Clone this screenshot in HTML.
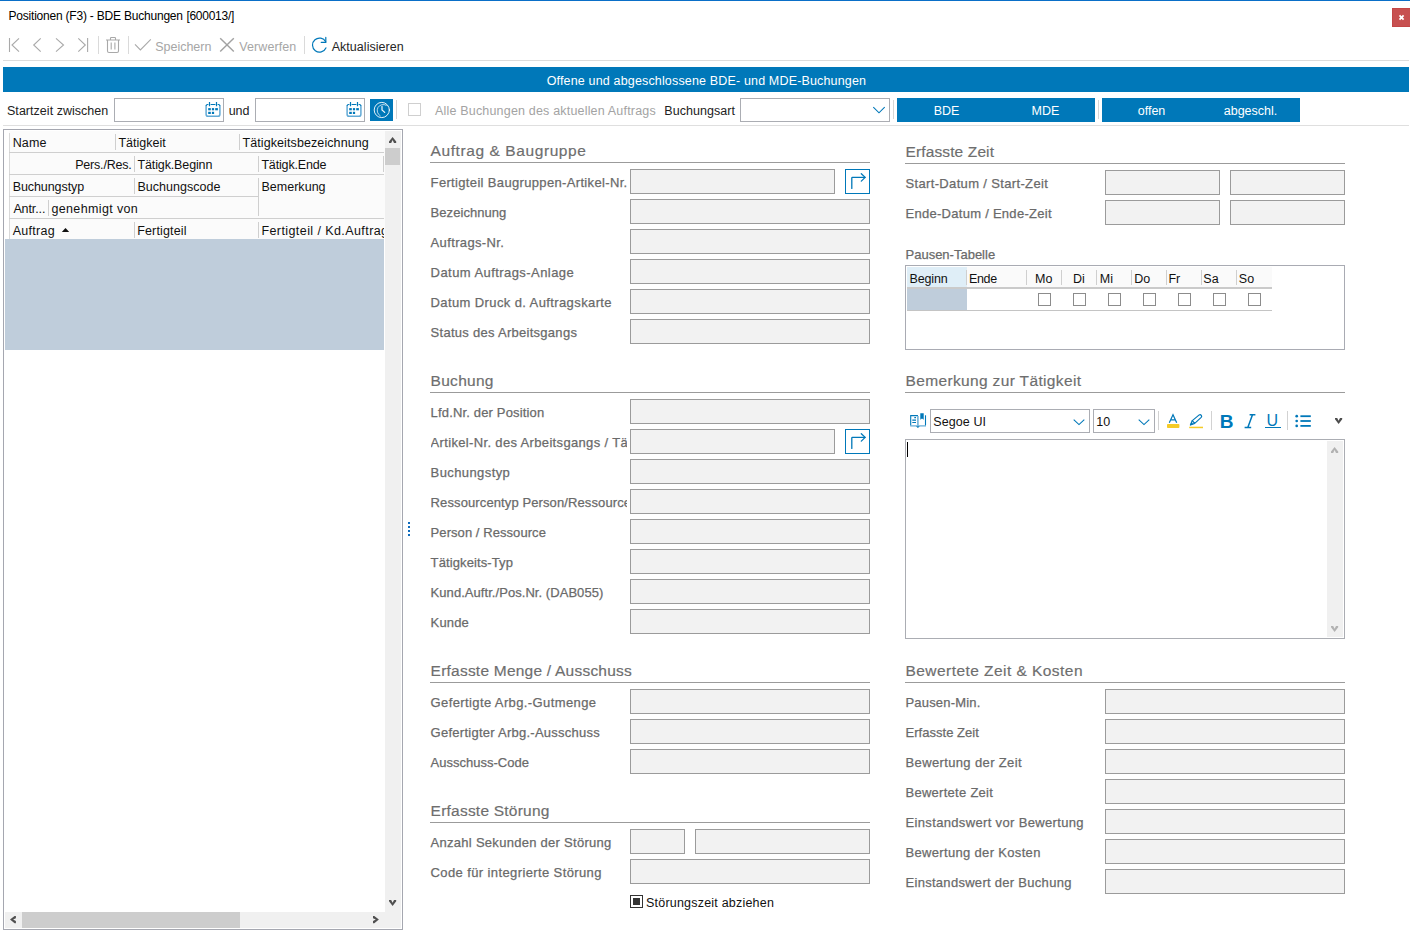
<!DOCTYPE html>
<html lang="de"><head><meta charset="utf-8"><title>Positionen (F3) - BDE Buchungen</title>
<style>
html,body{margin:0;padding:0;background:#fff;}
body{width:1410px;height:930px;overflow:hidden;font-family:"Liberation Sans",sans-serif;}
#app{position:relative;width:1410px;height:930px;overflow:hidden;background:#fff;}
#app div,#app svg,#app .t{position:absolute;}
#app .t{white-space:pre;line-height:normal;display:block;}
#app svg{overflow:visible;}
</style></head><body><div id="app">
<div style="left:0px;top:0px;width:1410px;height:1px;background:#0a6fc8;"></div>
<span class="t" style="left:8.50px;top:9.00px;font-family:'Liberation Sans',sans-serif;font-size:12px;font-weight:400;font-style:normal;color:#000;letter-spacing:-0.209px;">Positionen (F3) - BDE Buchungen</span>
<span class="t" style="left:186.40px;top:9.00px;font-family:'Liberation Sans',sans-serif;font-size:12px;font-weight:400;font-style:normal;color:#000;letter-spacing:-0.268px;">[600013/]</span>
<div style="left:1392px;top:8px;width:19px;height:19px;background:#c75050;border:1px solid #c34646;box-sizing:border-box;"></div>
<svg style="left:1398px;top:14px;" width="7" height="7" viewBox="0 0 7 7"><path d="M1.5 1.4 L5.6 5.7 M5.6 1.4 L1.5 5.7" stroke="#fff" stroke-width="1.75" fill="none"/></svg>
<svg style="left:5px;top:34px;" width="130" height="22" viewBox="0 0 130 22"><g fill="none" stroke="#a9a9a9" stroke-width="1.1">
<path d="M4.5 4 V18"/><path d="M14 4.3 L7 11 L14 17.7"/>
<path d="M35.7 4.3 L28.7 11 L35.7 17.7"/>
<path d="M51 4.3 L58.5 11 L51 17.7"/>
<path d="M73.3 4.3 L80.3 11 L73.3 17.7"/><path d="M82.6 4 V18"/>
<path d="M101 6 H115 M105.5 6 V4.2 Q105.5 3.5 106.2 3.5 H109.8 Q110.5 3.5 110.5 4.2 V6 M102.5 6 V17 Q102.5 18.5 104 18.5 H112 Q113.5 18.5 113.5 17 V6 M106.2 8.5 V15.5 M109.9 8.5 V15.5"/>
</g></svg>
<div style="left:98px;top:36px;width:1px;height:18px;background:#dadada;"></div>
<div style="left:128px;top:36px;width:1px;height:18px;background:#dadada;"></div>
<svg style="left:132px;top:36px;" width="22" height="18" viewBox="0 0 22 18"><path d="M3 8.4 L8.4 13.9 L18.8 3.4" fill="none" stroke="#a9a9a9" stroke-width="1.1"/></svg>
<span class="t" style="left:155.30px;top:40.00px;font-family:'Liberation Sans',sans-serif;font-size:12.5px;font-weight:400;font-style:normal;color:#a6a6a6;letter-spacing:-0.025px;">Speichern</span>
<svg style="left:218px;top:36px;" width="18" height="18" viewBox="0 0 18 18"><path d="M2.2 2.2 L15.8 15.6 M15.8 2.2 L2.2 15.6" fill="none" stroke="#a2a2a2" stroke-width="1.45"/></svg>
<span class="t" style="left:239.20px;top:40.00px;font-family:'Liberation Sans',sans-serif;font-size:12.5px;font-weight:400;font-style:normal;color:#a6a6a6;letter-spacing:0.102px;">Verwerfen</span>
<div style="left:304px;top:36px;width:1px;height:18px;background:#dadada;"></div>
<svg style="left:310px;top:35px;" width="20" height="20" viewBox="0 0 20 20"><g fill="none" stroke="#0078b9" stroke-width="1.2" stroke-linecap="round">
<path d="M15.7 6.8 A7 7 0 1 0 15.9 12.9"/><path d="M15.8 2.4 V7.3 H11.2"/></g></svg>
<span class="t" style="left:331.70px;top:40.00px;font-family:'Liberation Sans',sans-serif;font-size:12.5px;font-weight:400;font-style:normal;color:#262626;letter-spacing:0.035px;">Aktualisieren</span>
<div style="left:3px;top:60px;width:1406px;height:1px;background:#dcdcdc;"></div>
<div style="left:3px;top:67px;width:1406px;height:25px;background:#0078b9;"></div>
<span class="t" style="left:546.70px;top:73.50px;font-family:'Liberation Sans',sans-serif;font-size:12.5px;font-weight:400;font-style:normal;color:#fff;letter-spacing:0.160px;">Offene und abgeschlossene BDE- und MDE-Buchungen</span>
<span class="t" style="left:7.00px;top:104.00px;font-family:'Liberation Sans',sans-serif;font-size:12.5px;font-weight:400;font-style:normal;color:#222;letter-spacing:0.033px;">Startzeit zwischen</span>
<div style="left:114px;top:98px;width:110px;height:24px;background:#fff;border:1px solid #abadb3;box-sizing:border-box;"></div>
<svg style="left:205px;top:101px;" width="16" height="17" viewBox="0 0 16 17"><g fill="none">
<path d="M1.1 4.6 V13.2 Q1.1 15.3 3.2 15.3 H12.8 Q14.9 15.3 14.9 13.2 V4.6" stroke="#62aad6" stroke-width="1.5"/>
<path d="M1.1 5 Q1.1 3.5 2.7 3.5 H3.4 M5.6 3.5 H10.4 M12.6 3.5 H13.3 Q14.9 3.5 14.9 5" stroke="#0078b9" stroke-width="1.2"/>
<path d="M4.5 0.9 V5.3 M11.5 0.9 V5.3" stroke="#0078b9" stroke-width="1.2"/></g>
<g fill="#0078b9"><rect x="3.2" y="7.1" width="2.6" height="2.2"/><rect x="6.9" y="7.1" width="2.2" height="2.2"/><rect x="10.2" y="7.1" width="2.7" height="2.2"/>
<rect x="3.2" y="10.8" width="2.6" height="2.2"/><rect x="6.9" y="10.8" width="2.2" height="2.2"/></g></svg>
<span class="t" style="left:228.67px;top:104.00px;font-family:'Liberation Sans',sans-serif;font-size:12.5px;font-weight:400;font-style:normal;color:#222;">und</span>
<div style="left:255px;top:98px;width:110px;height:24px;background:#fff;border:1px solid #abadb3;box-sizing:border-box;"></div>
<svg style="left:346px;top:101px;" width="16" height="17" viewBox="0 0 16 17"><g fill="none">
<path d="M1.1 4.6 V13.2 Q1.1 15.3 3.2 15.3 H12.8 Q14.9 15.3 14.9 13.2 V4.6" stroke="#62aad6" stroke-width="1.5"/>
<path d="M1.1 5 Q1.1 3.5 2.7 3.5 H3.4 M5.6 3.5 H10.4 M12.6 3.5 H13.3 Q14.9 3.5 14.9 5" stroke="#0078b9" stroke-width="1.2"/>
<path d="M4.5 0.9 V5.3 M11.5 0.9 V5.3" stroke="#0078b9" stroke-width="1.2"/></g>
<g fill="#0078b9"><rect x="3.2" y="7.1" width="2.6" height="2.2"/><rect x="6.9" y="7.1" width="2.2" height="2.2"/><rect x="10.2" y="7.1" width="2.7" height="2.2"/>
<rect x="3.2" y="10.8" width="2.6" height="2.2"/><rect x="6.9" y="10.8" width="2.2" height="2.2"/></g></svg>
<div style="left:370px;top:99px;width:23px;height:22px;background:#0078b9;"></div>
<svg style="left:370px;top:99px;" width="23" height="22" viewBox="0 0 23 22"><g fill="none" stroke="#fff" stroke-linecap="round">
<circle cx="11.8" cy="11" r="7.6" stroke-width="1" opacity=".9"/>
<path d="M16.3 6.3 A6 6 0 1 0 10.2 16.8" stroke-width=".9" opacity=".8"/>
<path d="M12 7.4 V11 L14.7 13.4" stroke-width="1.2" opacity=".95"/></g></svg>
<div style="left:396px;top:100px;width:1px;height:19px;background:#d6d6d6;"></div>
<div style="left:408px;top:103px;width:13px;height:13px;background:#fff;border:1px solid #cfcfcf;box-sizing:border-box;"></div>
<span class="t" style="left:435.00px;top:104.00px;font-family:'Liberation Sans',sans-serif;font-size:12.5px;font-weight:400;font-style:normal;color:#a3a3a3;letter-spacing:0.185px;">Alle Buchungen des aktuellen Auftrags</span>
<span class="t" style="left:664.30px;top:104.00px;font-family:'Liberation Sans',sans-serif;font-size:12.5px;font-weight:400;font-style:normal;color:#222;letter-spacing:0.051px;">Buchungsart</span>
<div style="left:740px;top:98px;width:150px;height:24px;background:#fff;border:1px solid #abadb3;box-sizing:border-box;"></div>
<svg style="left:872px;top:105px;" width="14" height="10" viewBox="0 0 14 10"><path d="M1.3 2.2 L7 7.8 L12.7 2.2" fill="none" stroke="#0078b9" stroke-width="1.1"/></svg>
<div style="left:893px;top:100px;width:1px;height:19px;background:#d6d6d6;"></div>
<div style="left:897px;top:98px;width:198px;height:24px;background:#0078b9;"></div>
<span class="t" style="left:933.65px;top:104.00px;font-family:'Liberation Sans',sans-serif;font-size:12.5px;font-weight:400;font-style:normal;color:#fff;">BDE</span>
<span class="t" style="left:1031.61px;top:104.00px;font-family:'Liberation Sans',sans-serif;font-size:12.5px;font-weight:400;font-style:normal;color:#fff;">MDE</span>
<div style="left:1098px;top:100px;width:1px;height:19px;background:#d6d6d6;"></div>
<div style="left:1102px;top:98px;width:198px;height:24px;background:#0078b9;"></div>
<span class="t" style="left:1137.71px;top:104.00px;font-family:'Liberation Sans',sans-serif;font-size:12.5px;font-weight:400;font-style:normal;color:#fff;">offen</span>
<span class="t" style="left:1223.74px;top:104.00px;font-family:'Liberation Sans',sans-serif;font-size:12.5px;font-weight:400;font-style:normal;color:#fff;">abgeschl.</span>
<div style="left:3px;top:125px;width:1406px;height:1px;background:#dfdfdf;"></div>
<div style="left:3px;top:129px;width:400px;height:801px;background:#fff;border:1px solid #a5a7b0;box-sizing:border-box;"></div>
<div style="left:9px;top:131px;width:376px;height:108px;background:#fbfbfb;"></div>
<div style="left:9px;top:133px;width:1px;height:106px;background:#d9d9d9;"></div>
<div style="left:9px;top:152px;width:375px;height:1px;background:#cfcfcf;"></div>
<div style="left:9px;top:174px;width:375px;height:1px;background:#cfcfcf;"></div>
<div style="left:9px;top:218px;width:375px;height:1px;background:#cfcfcf;"></div>
<div style="left:9px;top:196px;width:250px;height:1px;background:#cfcfcf;"></div>
<div style="left:115px;top:134px;width:1px;height:16px;background:#cfcfcf;"></div>
<div style="left:239px;top:134px;width:1px;height:16px;background:#cfcfcf;"></div>
<div style="left:134px;top:156px;width:1px;height:16px;background:#cfcfcf;"></div>
<div style="left:258px;top:156px;width:1px;height:16px;background:#cfcfcf;"></div>
<div style="left:383px;top:156px;width:1px;height:16px;background:#cfcfcf;"></div>
<div style="left:134px;top:178px;width:1px;height:16px;background:#cfcfcf;"></div>
<div style="left:134px;top:222px;width:1px;height:16px;background:#cfcfcf;"></div>
<div style="left:258px;top:222px;width:1px;height:16px;background:#cfcfcf;"></div>
<div style="left:48px;top:200px;width:1px;height:16px;background:#cfcfcf;"></div>
<div style="left:258px;top:178px;width:1px;height:38px;background:#cfcfcf;"></div>
<span class="t" style="left:12.70px;top:136.00px;font-family:'Liberation Sans',sans-serif;font-size:12.5px;font-weight:400;font-style:normal;color:#111;letter-spacing:0.152px;">Name</span>
<span class="t" style="left:118.40px;top:136.00px;font-family:'Liberation Sans',sans-serif;font-size:12.5px;font-weight:400;font-style:normal;color:#111;letter-spacing:0.019px;">Tätigkeit</span>
<span class="t" style="left:242.40px;top:136.00px;font-family:'Liberation Sans',sans-serif;font-size:12.5px;font-weight:400;font-style:normal;color:#111;letter-spacing:0.100px;">Tätigkeitsbezeichnung</span>
<span class="t" style="left:75.20px;top:158.00px;font-family:'Liberation Sans',sans-serif;font-size:12.5px;font-weight:400;font-style:normal;color:#111;letter-spacing:-0.195px;">Pers./Res.</span>
<span class="t" style="left:137.50px;top:158.00px;font-family:'Liberation Sans',sans-serif;font-size:12.5px;font-weight:400;font-style:normal;color:#111;letter-spacing:-0.128px;">Tätigk.Beginn</span>
<span class="t" style="left:261.40px;top:158.00px;font-family:'Liberation Sans',sans-serif;font-size:12.5px;font-weight:400;font-style:normal;color:#111;letter-spacing:-0.152px;">Tätigk.Ende</span>
<span class="t" style="left:12.70px;top:180.00px;font-family:'Liberation Sans',sans-serif;font-size:12.5px;font-weight:400;font-style:normal;color:#111;letter-spacing:-0.078px;">Buchungstyp</span>
<span class="t" style="left:137.50px;top:180.00px;font-family:'Liberation Sans',sans-serif;font-size:12.5px;font-weight:400;font-style:normal;color:#111;letter-spacing:0.018px;">Buchungscode</span>
<span class="t" style="left:261.40px;top:180.00px;font-family:'Liberation Sans',sans-serif;font-size:12.5px;font-weight:400;font-style:normal;color:#111;letter-spacing:0.033px;">Bemerkung</span>
<span class="t" style="left:13.40px;top:202.00px;font-family:'Liberation Sans',sans-serif;font-size:12.5px;font-weight:400;font-style:normal;color:#111;letter-spacing:-0.109px;">Antr...</span>
<span class="t" style="left:51.40px;top:202.00px;font-family:'Liberation Sans',sans-serif;font-size:12.5px;font-weight:400;font-style:normal;color:#111;letter-spacing:0.365px;">genehmigt von</span>
<span class="t" style="left:12.70px;top:224.00px;font-family:'Liberation Sans',sans-serif;font-size:12.5px;font-weight:400;font-style:normal;color:#111;letter-spacing:0.298px;">Auftrag</span>
<svg style="left:61px;top:227px;" width="9" height="6" viewBox="0 0 9 6"><path d="M0.8 5 L4.5 1 L8.2 5 Z" fill="#111"/></svg>
<span class="t" style="left:137.20px;top:224.00px;font-family:'Liberation Sans',sans-serif;font-size:12.5px;font-weight:400;font-style:normal;color:#111;letter-spacing:0.163px;">Fertigteil</span>
<span class="t" style="left:261.40px;top:224.00px;font-family:'Liberation Sans',sans-serif;font-size:12.5px;font-weight:400;font-style:normal;color:#111;letter-spacing:0.420px;width:122.6px;overflow:hidden;">Fertigteil / Kd.Auftrag</span>
<div style="left:5px;top:239px;width:379px;height:111px;background:#bfcddb;"></div>
<div style="left:385px;top:131px;width:16px;height:797px;background:#f0f0f0;"></div>
<div style="left:385px;top:148px;width:15px;height:17px;background:#cdcdcd;"></div>
<svg style="left:388.9px;top:137.4px" width="7.2" height="5.9"><path transform="translate(0 5.9) scale(1 -1)" d="M0 0 H2.2 L3.6 2.8 L5 0 H7.2 V1.3 L3.6 5.9 L0 1.3 Z" fill="#505050"/></svg>
<svg style="left:388.9px;top:899.9px" width="7.2" height="5.9"><path transform="" d="M0 0 H2.2 L3.6 2.8 L5 0 H7.2 V1.3 L3.6 5.9 L0 1.3 Z" fill="#505050"/></svg>
<div style="left:5px;top:912px;width:380px;height:16px;background:#f0f0f0;"></div>
<div style="left:22px;top:912px;width:218px;height:16px;background:#cdcdcd;"></div>
<svg style="left:10.2px;top:915.9px" width="5.9" height="7.2"><path transform="translate(5.9 0) rotate(90)" d="M0 0 H2.2 L3.6 2.8 L5 0 H7.2 V1.3 L3.6 5.9 L0 1.3 Z" fill="#505050"/></svg>
<svg style="left:373.2px;top:915.9px" width="5.9" height="7.2"><path transform="rotate(-90) translate(-7.2 0)" d="M0 0 H2.2 L3.6 2.8 L5 0 H7.2 V1.3 L3.6 5.9 L0 1.3 Z" fill="#505050"/></svg>
<div style="left:408px;top:522px;width:2px;height:2px;background:#0f6cbd;"></div>
<div style="left:408px;top:526px;width:2px;height:2px;background:#0f6cbd;"></div>
<div style="left:408px;top:530px;width:2px;height:2px;background:#0f6cbd;"></div>
<div style="left:408px;top:534px;width:2px;height:2px;background:#0f6cbd;"></div>
<span class="t" style="left:430.60px;top:142.00px;font-family:'Liberation Sans',sans-serif;font-size:15.5px;font-weight:400;font-style:normal;color:#6e6e6e;letter-spacing:0.584px;-webkit-text-stroke:0.18px #6e6e6e;">Auftrag &amp; Baugruppe</span>
<div style="left:430px;top:162px;width:440px;height:1px;background:#9b9b9b;"></div>
<span class="t" style="left:430.60px;top:174.50px;font-family:'Liberation Sans',sans-serif;font-size:13px;font-weight:400;font-style:normal;color:#6a6a6a;letter-spacing:0.341px;-webkit-text-stroke:0.25px #6a6a6a;">Fertigteil Baugruppen-Artikel-Nr.</span>
<div style="left:630px;top:169px;width:205px;height:25px;background:#f2f2f2;border:1px solid #9b9b9b;box-sizing:border-box;"></div>
<span class="t" style="left:430.60px;top:204.50px;font-family:'Liberation Sans',sans-serif;font-size:13px;font-weight:400;font-style:normal;color:#6a6a6a;letter-spacing:0.053px;-webkit-text-stroke:0.25px #6a6a6a;">Bezeichnung</span>
<div style="left:630px;top:199px;width:240px;height:25px;background:#f2f2f2;border:1px solid #9b9b9b;box-sizing:border-box;"></div>
<span class="t" style="left:430.60px;top:234.50px;font-family:'Liberation Sans',sans-serif;font-size:13px;font-weight:400;font-style:normal;color:#6a6a6a;letter-spacing:0.358px;-webkit-text-stroke:0.25px #6a6a6a;">Auftrags-Nr.</span>
<div style="left:630px;top:229px;width:240px;height:25px;background:#f2f2f2;border:1px solid #9b9b9b;box-sizing:border-box;"></div>
<span class="t" style="left:430.60px;top:264.50px;font-family:'Liberation Sans',sans-serif;font-size:13px;font-weight:400;font-style:normal;color:#6a6a6a;letter-spacing:0.435px;-webkit-text-stroke:0.25px #6a6a6a;">Datum Auftrags-Anlage</span>
<div style="left:630px;top:259px;width:240px;height:25px;background:#f2f2f2;border:1px solid #9b9b9b;box-sizing:border-box;"></div>
<span class="t" style="left:430.60px;top:294.50px;font-family:'Liberation Sans',sans-serif;font-size:13px;font-weight:400;font-style:normal;color:#6a6a6a;letter-spacing:0.388px;-webkit-text-stroke:0.25px #6a6a6a;">Datum Druck d. Auftragskarte</span>
<div style="left:630px;top:289px;width:240px;height:25px;background:#f2f2f2;border:1px solid #9b9b9b;box-sizing:border-box;"></div>
<span class="t" style="left:430.60px;top:324.50px;font-family:'Liberation Sans',sans-serif;font-size:13px;font-weight:400;font-style:normal;color:#6a6a6a;letter-spacing:0.277px;-webkit-text-stroke:0.25px #6a6a6a;">Status des Arbeitsgangs</span>
<div style="left:630px;top:319px;width:240px;height:25px;background:#f2f2f2;border:1px solid #9b9b9b;box-sizing:border-box;"></div>
<div style="left:845px;top:169px;width:25px;height:25px;background:#fff;border:1px solid #0078b9;box-sizing:border-box;"></div>
<svg style="left:845px;top:169px;" width="25" height="25" viewBox="0 0 25 25"><g fill="none" stroke="#0078b9" stroke-width="1.3" stroke-linecap="round" stroke-linejoin="round">
<path d="M6.8 19.4 V9 Q6.8 8.4 7.4 8.4 H20"/><path d="M16.3 4.7 L20.2 8.4 L16.3 12.1"/></g></svg>
<span class="t" style="left:430.60px;top:372.20px;font-family:'Liberation Sans',sans-serif;font-size:15.5px;font-weight:400;font-style:normal;color:#6e6e6e;letter-spacing:0.283px;-webkit-text-stroke:0.18px #6e6e6e;">Buchung</span>
<div style="left:430px;top:392px;width:440px;height:1px;background:#9b9b9b;"></div>
<span class="t" style="left:430.60px;top:404.50px;font-family:'Liberation Sans',sans-serif;font-size:13px;font-weight:400;font-style:normal;color:#6a6a6a;letter-spacing:0.160px;-webkit-text-stroke:0.25px #6a6a6a;">Lfd.Nr. der Position</span>
<div style="left:630px;top:399px;width:240px;height:25px;background:#f2f2f2;border:1px solid #9b9b9b;box-sizing:border-box;"></div>
<span class="t" style="left:430.60px;top:434.50px;font-family:'Liberation Sans',sans-serif;font-size:13px;font-weight:400;font-style:normal;color:#6a6a6a;letter-spacing:0.340px;-webkit-text-stroke:0.25px #6a6a6a;width:196.4px;overflow:hidden;">Artikel-Nr. des Arbeitsgangs / Tätigkeit</span>
<div style="left:630px;top:429px;width:205px;height:25px;background:#f2f2f2;border:1px solid #9b9b9b;box-sizing:border-box;"></div>
<span class="t" style="left:430.60px;top:464.50px;font-family:'Liberation Sans',sans-serif;font-size:13px;font-weight:400;font-style:normal;color:#6a6a6a;letter-spacing:0.403px;-webkit-text-stroke:0.25px #6a6a6a;">Buchungstyp</span>
<div style="left:630px;top:459px;width:240px;height:25px;background:#f2f2f2;border:1px solid #9b9b9b;box-sizing:border-box;"></div>
<span class="t" style="left:430.60px;top:494.50px;font-family:'Liberation Sans',sans-serif;font-size:13px;font-weight:400;font-style:normal;color:#6a6a6a;letter-spacing:0.110px;-webkit-text-stroke:0.25px #6a6a6a;width:196.4px;overflow:hidden;">Ressourcentyp Person/Ressource</span>
<div style="left:630px;top:489px;width:240px;height:25px;background:#f2f2f2;border:1px solid #9b9b9b;box-sizing:border-box;"></div>
<span class="t" style="left:430.60px;top:524.50px;font-family:'Liberation Sans',sans-serif;font-size:13px;font-weight:400;font-style:normal;color:#6a6a6a;letter-spacing:0.066px;-webkit-text-stroke:0.25px #6a6a6a;">Person / Ressource</span>
<div style="left:630px;top:519px;width:240px;height:25px;background:#f2f2f2;border:1px solid #9b9b9b;box-sizing:border-box;"></div>
<span class="t" style="left:430.60px;top:554.50px;font-family:'Liberation Sans',sans-serif;font-size:13px;font-weight:400;font-style:normal;color:#6a6a6a;letter-spacing:0.106px;-webkit-text-stroke:0.25px #6a6a6a;">Tätigkeits-Typ</span>
<div style="left:630px;top:549px;width:240px;height:25px;background:#f2f2f2;border:1px solid #9b9b9b;box-sizing:border-box;"></div>
<span class="t" style="left:430.60px;top:584.50px;font-family:'Liberation Sans',sans-serif;font-size:13px;font-weight:400;font-style:normal;color:#6a6a6a;letter-spacing:0.054px;-webkit-text-stroke:0.25px #6a6a6a;">Kund.Auftr./Pos.Nr. (DAB055)</span>
<div style="left:630px;top:579px;width:240px;height:25px;background:#f2f2f2;border:1px solid #9b9b9b;box-sizing:border-box;"></div>
<span class="t" style="left:430.60px;top:614.50px;font-family:'Liberation Sans',sans-serif;font-size:13px;font-weight:400;font-style:normal;color:#6a6a6a;letter-spacing:0.152px;-webkit-text-stroke:0.25px #6a6a6a;">Kunde</span>
<div style="left:630px;top:609px;width:240px;height:25px;background:#f2f2f2;border:1px solid #9b9b9b;box-sizing:border-box;"></div>
<div style="left:845px;top:429px;width:25px;height:25px;background:#fff;border:1px solid #0078b9;box-sizing:border-box;"></div>
<svg style="left:845px;top:429px;" width="25" height="25" viewBox="0 0 25 25"><g fill="none" stroke="#0078b9" stroke-width="1.3" stroke-linecap="round" stroke-linejoin="round">
<path d="M6.8 19.4 V9 Q6.8 8.4 7.4 8.4 H20"/><path d="M16.3 4.7 L20.2 8.4 L16.3 12.1"/></g></svg>
<span class="t" style="left:430.60px;top:662.20px;font-family:'Liberation Sans',sans-serif;font-size:15.5px;font-weight:400;font-style:normal;color:#6e6e6e;letter-spacing:0.225px;-webkit-text-stroke:0.18px #6e6e6e;">Erfasste Menge / Ausschuss</span>
<div style="left:430px;top:682px;width:440px;height:1px;background:#9b9b9b;"></div>
<span class="t" style="left:430.60px;top:694.50px;font-family:'Liberation Sans',sans-serif;font-size:13px;font-weight:400;font-style:normal;color:#6a6a6a;letter-spacing:0.388px;-webkit-text-stroke:0.25px #6a6a6a;">Gefertigte Arbg.-Gutmenge</span>
<div style="left:630px;top:689px;width:240px;height:25px;background:#f2f2f2;border:1px solid #9b9b9b;box-sizing:border-box;"></div>
<span class="t" style="left:430.60px;top:724.50px;font-family:'Liberation Sans',sans-serif;font-size:13px;font-weight:400;font-style:normal;color:#6a6a6a;letter-spacing:0.255px;-webkit-text-stroke:0.25px #6a6a6a;">Gefertigter Arbg.-Ausschuss</span>
<div style="left:630px;top:719px;width:240px;height:25px;background:#f2f2f2;border:1px solid #9b9b9b;box-sizing:border-box;"></div>
<span class="t" style="left:430.60px;top:754.50px;font-family:'Liberation Sans',sans-serif;font-size:13px;font-weight:400;font-style:normal;color:#6a6a6a;-webkit-text-stroke:0.25px #6a6a6a;">Ausschuss-Code</span>
<div style="left:630px;top:749px;width:240px;height:25px;background:#f2f2f2;border:1px solid #9b9b9b;box-sizing:border-box;"></div>
<span class="t" style="left:430.60px;top:802.20px;font-family:'Liberation Sans',sans-serif;font-size:15.5px;font-weight:400;font-style:normal;color:#6e6e6e;letter-spacing:0.223px;-webkit-text-stroke:0.18px #6e6e6e;">Erfasste Störung</span>
<div style="left:430px;top:822px;width:440px;height:1px;background:#9b9b9b;"></div>
<span class="t" style="left:430.60px;top:834.50px;font-family:'Liberation Sans',sans-serif;font-size:13px;font-weight:400;font-style:normal;color:#6a6a6a;letter-spacing:0.278px;-webkit-text-stroke:0.25px #6a6a6a;">Anzahl Sekunden der Störung</span>
<div style="left:630px;top:829px;width:55px;height:25px;background:#f2f2f2;border:1px solid #9b9b9b;box-sizing:border-box;"></div>
<div style="left:695px;top:829px;width:175px;height:25px;background:#f2f2f2;border:1px solid #9b9b9b;box-sizing:border-box;"></div>
<span class="t" style="left:430.60px;top:864.50px;font-family:'Liberation Sans',sans-serif;font-size:13px;font-weight:400;font-style:normal;color:#6a6a6a;letter-spacing:0.387px;-webkit-text-stroke:0.25px #6a6a6a;">Code für integrierte Störung</span>
<div style="left:630px;top:859px;width:240px;height:25px;background:#f2f2f2;border:1px solid #9b9b9b;box-sizing:border-box;"></div>
<div style="left:630px;top:895px;width:13px;height:13px;background:#fff;border:1px solid #333;box-sizing:border-box;"></div>
<div style="left:633px;top:898px;width:7px;height:7px;background:#353535;"></div>
<span class="t" style="left:646.00px;top:895.50px;font-family:'Liberation Sans',sans-serif;font-size:12.5px;font-weight:400;font-style:normal;color:#111;letter-spacing:0.210px;">Störungszeit abziehen</span>
<span class="t" style="left:905.50px;top:143.00px;font-family:'Liberation Sans',sans-serif;font-size:15.5px;font-weight:400;font-style:normal;color:#6e6e6e;letter-spacing:0.125px;-webkit-text-stroke:0.18px #6e6e6e;">Erfasste Zeit</span>
<div style="left:905px;top:163px;width:440px;height:1px;background:#9b9b9b;"></div>
<span class="t" style="left:905.50px;top:176.00px;font-family:'Liberation Sans',sans-serif;font-size:13px;font-weight:400;font-style:normal;color:#6a6a6a;letter-spacing:0.345px;-webkit-text-stroke:0.25px #6a6a6a;">Start-Datum / Start-Zeit</span>
<span class="t" style="left:905.50px;top:206.00px;font-family:'Liberation Sans',sans-serif;font-size:13px;font-weight:400;font-style:normal;color:#6a6a6a;letter-spacing:0.277px;-webkit-text-stroke:0.25px #6a6a6a;">Ende-Datum / Ende-Zeit</span>
<div style="left:1105px;top:170px;width:115px;height:25px;background:#f2f2f2;border:1px solid #9b9b9b;box-sizing:border-box;"></div>
<div style="left:1230px;top:170px;width:115px;height:25px;background:#f2f2f2;border:1px solid #9b9b9b;box-sizing:border-box;"></div>
<div style="left:1105px;top:200px;width:115px;height:25px;background:#f2f2f2;border:1px solid #9b9b9b;box-sizing:border-box;"></div>
<div style="left:1230px;top:200px;width:115px;height:25px;background:#f2f2f2;border:1px solid #9b9b9b;box-sizing:border-box;"></div>
<span class="t" style="left:905.50px;top:247.00px;font-family:'Liberation Sans',sans-serif;font-size:13px;font-weight:400;font-style:normal;color:#6a6a6a;-webkit-text-stroke:0.25px #6a6a6a;">Pausen-Tabelle</span>
<div style="left:905px;top:265px;width:440px;height:85px;background:#fff;border:1px solid #a9abb3;box-sizing:border-box;"></div>
<div style="left:907px;top:267px;width:365px;height:20px;background:#fafafa;"></div>
<div style="left:907px;top:267px;width:60px;height:20px;background:#dfeef7;"></div>
<div style="left:907px;top:287px;width:365px;height:2px;background:#cacaca;"></div>
<div style="left:907px;top:289px;width:60px;height:21px;background:#bfcddb;"></div>
<div style="left:907px;top:310px;width:365px;height:1px;background:#c4c4c4;"></div>
<div style="left:966px;top:270px;width:1px;height:15px;background:#cfcfcf;"></div>
<div style="left:1026px;top:270px;width:1px;height:15px;background:#cfcfcf;"></div>
<div style="left:1061px;top:270px;width:1px;height:15px;background:#cfcfcf;"></div>
<div style="left:1096px;top:270px;width:1px;height:15px;background:#cfcfcf;"></div>
<div style="left:1131px;top:270px;width:1px;height:15px;background:#cfcfcf;"></div>
<div style="left:1166px;top:270px;width:1px;height:15px;background:#cfcfcf;"></div>
<div style="left:1201px;top:270px;width:1px;height:15px;background:#cfcfcf;"></div>
<div style="left:1236px;top:270px;width:1px;height:15px;background:#cfcfcf;"></div>
<span class="t" style="left:909.50px;top:272.00px;font-family:'Liberation Sans',sans-serif;font-size:12.5px;font-weight:400;font-style:normal;color:#111;letter-spacing:-0.128px;">Beginn</span>
<span class="t" style="left:969.00px;top:272.00px;font-family:'Liberation Sans',sans-serif;font-size:12.5px;font-weight:400;font-style:normal;color:#111;letter-spacing:-0.368px;">Ende</span>
<span class="t" style="left:1035.06px;top:272.00px;font-family:'Liberation Sans',sans-serif;font-size:12.5px;font-weight:400;font-style:normal;color:#111;">Mo</span>
<span class="t" style="left:1072.94px;top:272.00px;font-family:'Liberation Sans',sans-serif;font-size:12.5px;font-weight:400;font-style:normal;color:#111;">Di</span>
<span class="t" style="left:1099.75px;top:272.00px;font-family:'Liberation Sans',sans-serif;font-size:12.5px;font-weight:400;font-style:normal;color:#111;">Mi</span>
<span class="t" style="left:1134.31px;top:272.00px;font-family:'Liberation Sans',sans-serif;font-size:12.5px;font-weight:400;font-style:normal;color:#111;">Do</span>
<span class="t" style="left:1168.49px;top:272.00px;font-family:'Liberation Sans',sans-serif;font-size:12.5px;font-weight:400;font-style:normal;color:#111;">Fr</span>
<span class="t" style="left:1203.35px;top:272.00px;font-family:'Liberation Sans',sans-serif;font-size:12.5px;font-weight:400;font-style:normal;color:#111;">Sa</span>
<span class="t" style="left:1238.85px;top:272.00px;font-family:'Liberation Sans',sans-serif;font-size:12.5px;font-weight:400;font-style:normal;color:#111;">So</span>
<div style="left:1038px;top:293px;width:13px;height:13px;background:#fff;border:1px solid #8c8c8c;box-sizing:border-box;"></div>
<div style="left:1073px;top:293px;width:13px;height:13px;background:#fff;border:1px solid #8c8c8c;box-sizing:border-box;"></div>
<div style="left:1108px;top:293px;width:13px;height:13px;background:#fff;border:1px solid #8c8c8c;box-sizing:border-box;"></div>
<div style="left:1143px;top:293px;width:13px;height:13px;background:#fff;border:1px solid #8c8c8c;box-sizing:border-box;"></div>
<div style="left:1178px;top:293px;width:13px;height:13px;background:#fff;border:1px solid #8c8c8c;box-sizing:border-box;"></div>
<div style="left:1213px;top:293px;width:13px;height:13px;background:#fff;border:1px solid #8c8c8c;box-sizing:border-box;"></div>
<div style="left:1248px;top:293px;width:13px;height:13px;background:#fff;border:1px solid #8c8c8c;box-sizing:border-box;"></div>
<span class="t" style="left:905.50px;top:372.00px;font-family:'Liberation Sans',sans-serif;font-size:15.5px;font-weight:400;font-style:normal;color:#6e6e6e;letter-spacing:0.354px;-webkit-text-stroke:0.18px #6e6e6e;">Bemerkung zur Tätigkeit</span>
<div style="left:905px;top:392px;width:440px;height:1px;background:#9b9b9b;"></div>
<svg style="left:908px;top:411px;" width="20" height="19" viewBox="0 0 20 19"><g fill="none" stroke="#0078b9" stroke-width="1.1">
<path d="M9.4 5 V4.6 H2.7 V14.6"/><path d="M17.5 4.3 V14.6"/>
<path d="M6.3 6.6 H8 M4.3 9.1 H8 M4.3 11.5 H8"/>
<path d="M9.9 5 V14.6" stroke="#6fb1d8" stroke-width="1.6"/>
<path d="M2.2 14.9 H18" stroke="#5ea8d4" stroke-width="1.2"/></g>
<path d="M12.3 2.3 H15.7 V8.8 L14 7.6 L12.3 8.8 Z" fill="#0078b9"/>
<path d="M8 15.3 H11.8 L9.9 17 Z" fill="#0078b9"/></svg>
<div style="left:930px;top:409px;width:160px;height:24px;background:#fff;border:1px solid #abadb3;box-sizing:border-box;"></div>
<span class="t" style="left:933.30px;top:415.00px;font-family:'Liberation Sans',sans-serif;font-size:12.5px;font-weight:400;font-style:normal;color:#111;letter-spacing:0.082px;">Segoe UI</span>
<svg style="left:1072px;top:417px;" width="14" height="10" viewBox="0 0 14 10"><path d="M1.7 2.6 L7 7.6 L12.3 2.6" fill="none" stroke="#0078b9" stroke-width="1.1"/></svg>
<div style="left:1093px;top:409px;width:62px;height:24px;background:#fff;border:1px solid #abadb3;box-sizing:border-box;"></div>
<span class="t" style="left:1096.30px;top:415.00px;font-family:'Liberation Sans',sans-serif;font-size:12.5px;font-weight:400;font-style:normal;color:#111;">10</span>
<svg style="left:1137px;top:417px;" width="14" height="10" viewBox="0 0 14 10"><path d="M1.7 2.6 L7 7.6 L12.3 2.6" fill="none" stroke="#0078b9" stroke-width="1.1"/></svg>
<div style="left:1158px;top:411px;width:1px;height:19px;background:#d2d2d2;"></div>
<div style="left:1211px;top:411px;width:1px;height:19px;background:#d2d2d2;"></div>
<div style="left:1287px;top:411px;width:1px;height:19px;background:#d2d2d2;"></div>
<svg style="left:1165px;top:412px;" width="16" height="18" viewBox="0 0 16 18"><path d="M4.3 10.8 L8 2.7 L11.7 10.8 M5.7 7.9 H10.3" fill="none" stroke="#0078b9" stroke-width="1.2"/>
<rect x="2" y="12" width="12.4" height="4" rx=".8" fill="#f5cb27"/></svg>
<svg style="left:1187px;top:412px;" width="18" height="18" viewBox="0 0 18 18"><g fill="none" stroke="#0078b9" stroke-width="1.2" stroke-linejoin="round">
<path d="M5.3 8.6 L12.2 2.9 Q13.4 2.2 14.3 3.4 Q15.1 4.5 14.2 5.4 L7.7 11.4 Z"/>
<path d="M5.3 8.6 L3.4 13 L7.7 11.4"/></g><path d="M3 13.4 L4.6 9.6 L6.2 12.3 Z" fill="#0078b9"/>
<rect x="2.2" y="14.7" width="13.8" height="1.5" fill="#f5cb27"/></svg>
<span class="t" style="left:1219.73px;top:410.60px;font-family:'Liberation Sans',sans-serif;font-size:19px;font-weight:700;font-style:normal;color:#0078b9;">B</span>
<svg style="left:1243px;top:412px;" width="14" height="18" viewBox="0 0 14 18"><path d="M6.6 2.7 H12.4 M1.6 15.6 H8.2 M9.5 2.7 L4.8 15.6" fill="none" stroke="#0078b9" stroke-width="1.5"/></svg>
<span class="t" style="left:1266.60px;top:412.00px;font-family:'Liberation Sans',sans-serif;font-size:16px;font-weight:400;font-style:normal;color:#0078b9;">U</span>
<div style="left:1265px;top:427px;width:16px;height:1px;background:#0078b9;"></div>
<svg style="left:1294px;top:413px;" width="18" height="16" viewBox="0 0 18 16"><g fill="#0078b9"><circle cx="2.7" cy="3.2" r="1.35"/><circle cx="2.7" cy="8" r="1.35"/><circle cx="2.7" cy="12.9" r="1.35"/>
<rect x="6.4" y="2.3" width="10.4" height="1.8"/><rect x="6.4" y="7.1" width="10.4" height="1.8"/><rect x="6.4" y="12" width="10.4" height="1.8"/></g></svg>
<svg style="left:1335px;top:418.2px" width="7.2" height="5.9"><path transform="" d="M0 0 H2.2 L3.6 2.8 L5 0 H7.2 V1.3 L3.6 5.9 L0 1.3 Z" fill="#4d4d4d"/></svg>
<div style="left:905px;top:439px;width:440px;height:200px;background:#fff;border:1px solid #abadb3;box-sizing:border-box;"></div>
<div style="left:1327px;top:441px;width:16px;height:196px;background:#f0f0f0;"></div>
<svg style="left:1330.8px;top:447.3px" width="7.2" height="5.9"><path transform="translate(0 5.9) scale(1 -1)" d="M0 0 H2.2 L3.6 2.8 L5 0 H7.2 V1.3 L3.6 5.9 L0 1.3 Z" fill="#b2b2b2"/></svg>
<svg style="left:1330.8px;top:625.9px" width="7.2" height="5.9"><path transform="" d="M0 0 H2.2 L3.6 2.8 L5 0 H7.2 V1.3 L3.6 5.9 L0 1.3 Z" fill="#b2b2b2"/></svg>
<div style="left:907px;top:442px;width:1px;height:15px;background:#000;"></div>
<span class="t" style="left:905.50px;top:662.00px;font-family:'Liberation Sans',sans-serif;font-size:15.5px;font-weight:400;font-style:normal;color:#6e6e6e;letter-spacing:0.448px;-webkit-text-stroke:0.18px #6e6e6e;">Bewertete Zeit &amp; Kosten</span>
<div style="left:905px;top:682px;width:440px;height:1px;background:#9b9b9b;"></div>
<span class="t" style="left:905.50px;top:695.00px;font-family:'Liberation Sans',sans-serif;font-size:13px;font-weight:400;font-style:normal;color:#6a6a6a;letter-spacing:0.182px;-webkit-text-stroke:0.25px #6a6a6a;">Pausen-Min.</span>
<div style="left:1105px;top:689px;width:240px;height:25px;background:#f2f2f2;border:1px solid #9b9b9b;box-sizing:border-box;"></div>
<span class="t" style="left:905.50px;top:725.00px;font-family:'Liberation Sans',sans-serif;font-size:13px;font-weight:400;font-style:normal;color:#6a6a6a;letter-spacing:0.036px;-webkit-text-stroke:0.25px #6a6a6a;">Erfasste Zeit</span>
<div style="left:1105px;top:719px;width:240px;height:25px;background:#f2f2f2;border:1px solid #9b9b9b;box-sizing:border-box;"></div>
<span class="t" style="left:905.50px;top:755.00px;font-family:'Liberation Sans',sans-serif;font-size:13px;font-weight:400;font-style:normal;color:#6a6a6a;letter-spacing:0.368px;-webkit-text-stroke:0.25px #6a6a6a;">Bewertung der Zeit</span>
<div style="left:1105px;top:749px;width:240px;height:25px;background:#f2f2f2;border:1px solid #9b9b9b;box-sizing:border-box;"></div>
<span class="t" style="left:905.50px;top:785.00px;font-family:'Liberation Sans',sans-serif;font-size:13px;font-weight:400;font-style:normal;color:#6a6a6a;letter-spacing:0.275px;-webkit-text-stroke:0.25px #6a6a6a;">Bewertete Zeit</span>
<div style="left:1105px;top:779px;width:240px;height:25px;background:#f2f2f2;border:1px solid #9b9b9b;box-sizing:border-box;"></div>
<span class="t" style="left:905.50px;top:815.00px;font-family:'Liberation Sans',sans-serif;font-size:13px;font-weight:400;font-style:normal;color:#6a6a6a;letter-spacing:0.346px;-webkit-text-stroke:0.25px #6a6a6a;">Einstandswert vor Bewertung</span>
<div style="left:1105px;top:809px;width:240px;height:25px;background:#f2f2f2;border:1px solid #9b9b9b;box-sizing:border-box;"></div>
<span class="t" style="left:905.50px;top:845.00px;font-family:'Liberation Sans',sans-serif;font-size:13px;font-weight:400;font-style:normal;color:#6a6a6a;letter-spacing:0.329px;-webkit-text-stroke:0.25px #6a6a6a;">Bewertung der Kosten</span>
<div style="left:1105px;top:839px;width:240px;height:25px;background:#f2f2f2;border:1px solid #9b9b9b;box-sizing:border-box;"></div>
<span class="t" style="left:905.50px;top:875.00px;font-family:'Liberation Sans',sans-serif;font-size:13px;font-weight:400;font-style:normal;color:#6a6a6a;letter-spacing:0.288px;-webkit-text-stroke:0.25px #6a6a6a;">Einstandswert der Buchung</span>
<div style="left:1105px;top:869px;width:240px;height:25px;background:#f2f2f2;border:1px solid #9b9b9b;box-sizing:border-box;"></div>
</div></body></html>
